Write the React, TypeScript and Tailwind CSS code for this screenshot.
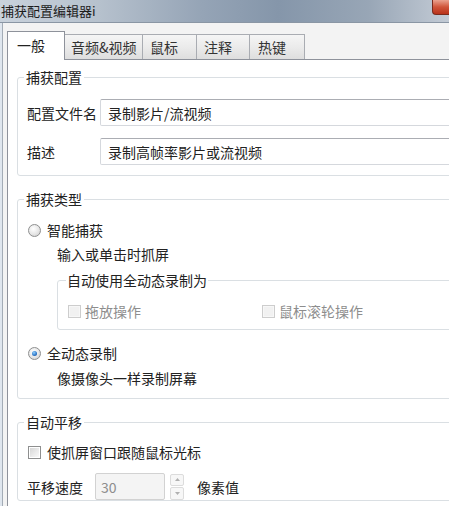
import type { ReactNode } from "react";

function Radio({ checked = false }: { checked?: boolean }) {
  return (
    <span className="inline-flex h-[13px] w-[13px] shrink-0 items-center justify-center rounded-full border border-[#8e8f8f] bg-[radial-gradient(circle_at_40%_35%,#ffffff_0%,#e6e6e6_55%,#c9c9c9_100%)]">
      {checked && (
        <span className="h-[5px] w-[5px] rounded-full bg-[radial-gradient(circle_at_40%_35%,#8fd0ff_0%,#2b74c6_60%,#17468a_100%)]" />
      )}
    </span>
  );
}

function Check({ disabled = false }: { disabled?: boolean }) {
  return (
    <span
      className={`inline-flex h-[13px] w-[13px] shrink-0 items-center justify-center border ${
        disabled ? "border-[#cdcdcd] bg-[#f7f7f7]" : "border-[#8e8f8f] bg-white"
      }`}
    >
      <span
        className={`h-[9px] w-[9px] ${
          disabled
            ? "bg-[#f1f1f1]"
            : "bg-[linear-gradient(135deg,#d6d6d6_0%,#ececec_60%,#f8f8f8_100%)]"
        }`}
      />
    </span>
  );
}

function Field({ children }: { children: ReactNode }) {
  return (
    <div className="flex h-[27px] flex-1 items-center rounded-[2px] border border-[#d5d8dd] border-t-[#abadb3] bg-white pl-[7px]">
      {children}
    </div>
  );
}

function Group({ title, className = "", children }: { title: string; className?: string; children: ReactNode }) {
  return (
    <fieldset className={`w-[450px] shrink-0 rounded-[3px] border border-[#dadfe3] ${className}`}>
      <legend className="ml-[6px] px-[2px]">{title}</legend>
      {children}
    </fieldset>
  );
}

const TABS = [
  { label: "音频&视频", w: "w-[78px]", pl: "pl-[6px]" },
  { label: "鼠标", w: "w-[54px]", pl: "pl-[7px]" },
  { label: "注释", w: "w-[53px]", pl: "pl-[7px]" },
  { label: "热键", w: "w-[55px]", pl: "pl-[8px]" },
];

export default function App() {
  return (
    <div className="flex h-[506px] w-[449px] flex-col overflow-hidden bg-[#f0f0f0] font-['Noto_Sans_CJK_SC','Liberation_Sans',sans-serif] text-[14px] leading-[20px] text-[#222]">
      {/* title bar */}
      <div className="flex h-[23px] shrink-0 items-start border-b border-[#8a96a4] bg-[linear-gradient(90deg,#c9d2dc_0%,#b6c1cd_22%,#95a4b6_45%,#8596aa_62%,#98a6b6_82%,#c3cbd5_100%)]">
        <span className="pl-[1px] pt-[1px] text-[13px] leading-[20px] text-[#1c1c1c]">捕获配置编辑器i</span>
        <span className="ml-auto h-[15px] w-[17px] rounded-bl-[4px] border-b border-l border-[#7a2b1d] bg-[linear-gradient(180deg,#eaa28f_0%,#d0553a_50%,#b8321b_100%)]" />
      </div>

      <div className="flex min-h-0 flex-1">
        <div className="w-[3px] shrink-0 border-r border-[#a3acb6] bg-[#dfe6ee]" />
        <div className="flex min-w-0 flex-1 flex-col bg-[#f3f3f3] pl-[4px]">
          {/* tabs */}
          <div className="flex h-[36px] shrink-0 items-end">
            <div className="relative z-10 -mb-px h-[29px] w-[58px] border border-b-0 border-[#8e929b] bg-white pl-[9px] pt-[3px]">
              一般
            </div>
            {TABS.map((t) => (
              <div
                key={t.label}
                className={`h-[25px] ${t.w} ${t.pl} border-r border-t border-[#a9acb2] bg-[linear-gradient(180deg,#f5f5f5_0%,#ebebeb_50%,#dedede_100%)] pt-[2px] text-[#333]`}
              >
                {t.label}
              </div>
            ))}
          </div>

          {/* panel */}
          <div className="flex min-h-0 flex-1 flex-col overflow-hidden border-l border-t border-[#8e929b] bg-white pl-[9px] pt-[7px]">
            <Group title="捕获配置">
              <div className="flex flex-col gap-[12px] pb-[10px] pl-[9px] pt-[12px]">
                <div className="flex items-center">
                  <span className="w-[73px] shrink-0">配置文件名</span>
                  <Field>录制影片/流视频</Field>
                </div>
                <div className="flex items-center">
                  <span className="w-[73px] shrink-0">描述</span>
                  <Field>录制高帧率影片或流视频</Field>
                </div>
              </div>
            </Group>

            <Group title="捕获类型" className="mt-[13px]">
              <div className="pb-[10px] pl-[10px] pt-[11px]">
                <div className="flex items-center gap-[6px]">
                  <Radio />
                  <span>智能捕获</span>
                </div>
                <div className="mt-[4px] pl-[29px]">输入或单击时抓屏</div>
                <fieldset className="ml-[29px] mt-[6px] w-[420px] rounded-[3px] border border-[#dadfe3]">
                  <legend className="ml-[8px] px-[1px]">自动使用全动态录制为</legend>
                  <div className="flex pb-[8px] pl-[10px] pt-[11px] text-[#8d8d8d]">
                    <div className="flex w-[194px] items-center gap-[4px]">
                      <Check disabled />
                      <span>拖放操作</span>
                    </div>
                    <div className="flex items-center gap-[4px]">
                      <Check disabled />
                      <span>鼠标滚轮操作</span>
                    </div>
                  </div>
                </fieldset>
                <div className="mt-[13px] flex items-center gap-[6px]">
                  <Radio checked />
                  <span>全动态录制</span>
                </div>
                <div className="mt-[5px] pl-[29px]">像摄像头一样录制屏幕</div>
              </div>
            </Group>

            <Group title="自动平移" className="mt-[13px]">
              <div className="pl-[10px] pt-[10px]">
                <div className="flex items-center gap-[6px]">
                  <Check />
                  <span>使抓屏窗口跟随鼠标光标</span>
                </div>
                <div className="-ml-px mt-[11px] flex items-center">
                  <span className="w-[68px] shrink-0">平移速度</span>
                  <div className="flex h-[27px] w-[70px] items-center rounded-[2px] border border-[#d2d2d2] bg-[#f4f4f4] pl-[5px] text-[#8d8d8d]">
                    30
                  </div>
                  <div className="ml-[5px] flex h-[26px] w-[14px] flex-col gap-px">
                    <div className="flex flex-1 items-center justify-center rounded-[2px] border border-[#dcdcdc] bg-[#f7f7f7]">
                      <svg width="5" height="3" viewBox="0 0 5 3">
                        <path d="M2.5 0 L5 3 L0 3 Z" fill="#b0b0b0" />
                      </svg>
                    </div>
                    <div className="flex flex-1 items-center justify-center rounded-[2px] border border-[#dcdcdc] bg-[#f7f7f7]">
                      <svg width="5" height="3" viewBox="0 0 5 3">
                        <path d="M0 0 L5 0 L2.5 3 Z" fill="#b0b0b0" />
                      </svg>
                    </div>
                  </div>
                  <span className="ml-[13px]">像素值</span>
                </div>
              </div>
            </Group>
          </div>
        </div>
      </div>
    </div>
  );
}
